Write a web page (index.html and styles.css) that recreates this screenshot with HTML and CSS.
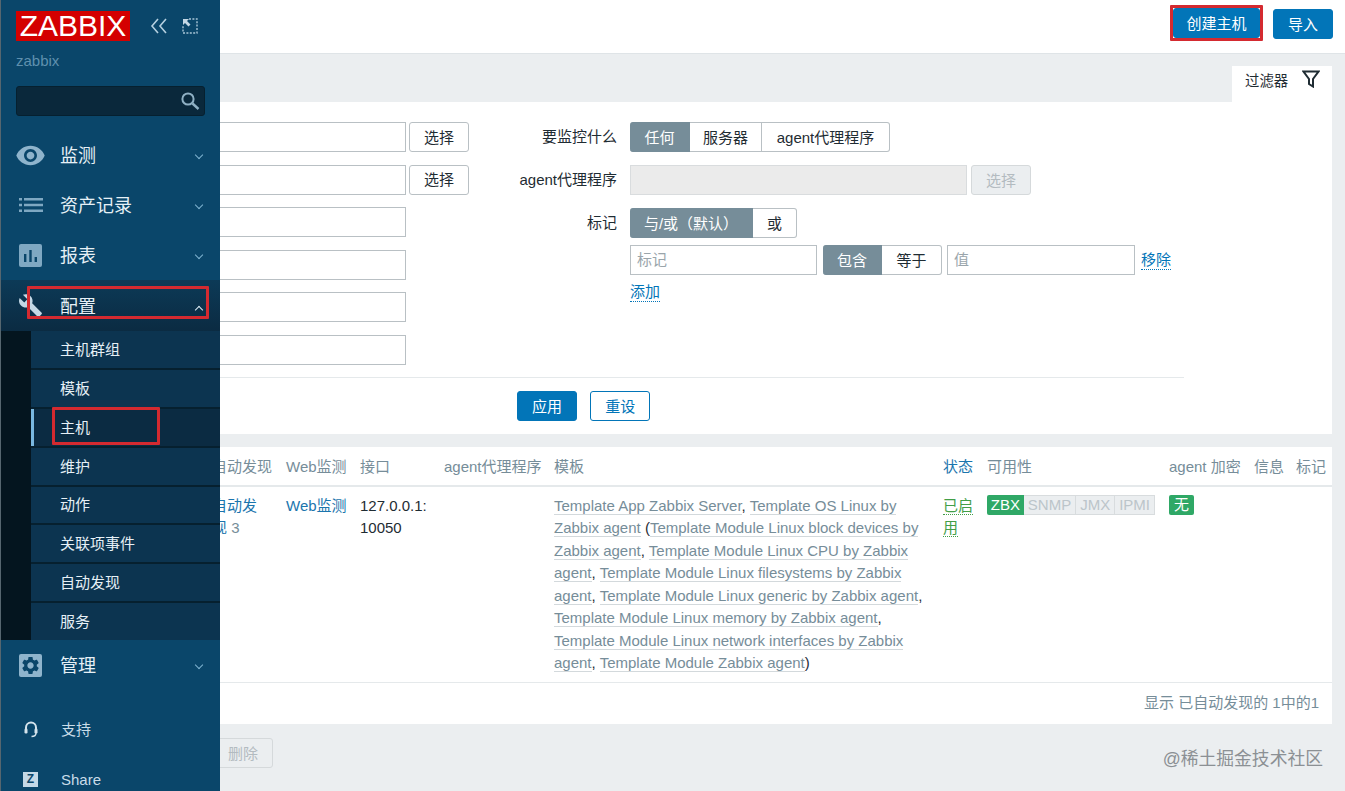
FILE: index.html
```html
<!DOCTYPE html>
<html lang="zh-CN">

<head>
    <meta charset="UTF-8">
    <title>配置 主机</title>
    <link rel="stylesheet" href="styles.css">
</head>

<body>

    <!-- 侧边栏 -->
    <aside class="sidebar">
        <div class="logo-row">
            <div class="logo">ZABBIX</div>
            <svg class="collapse-icon" viewBox="0 0 18 16" width="18" height="16"><path d="M8 1 2 8l6 7M16 1l-6 7 6 7" fill="none" stroke="#b5d0e0" stroke-width="1.6"/></svg>
            <svg class="expand-icon" viewBox="0 0 16 16" width="16" height="16"><path d="M7 1h8v14H1V7" fill="none" stroke="#a9c6d8" stroke-width="1.4" stroke-dasharray="2 1.4"/><path d="M1 1h6L5 3l3.5 3.5-2 2L3 5 1 7z" fill="#c4d8e6"/></svg>
        </div>
        <div class="server-name">zabbix</div>
        <div class="search-box">
            <svg viewBox="0 0 20 20" width="20" height="20"><circle cx="8" cy="8" r="5.6" fill="none" stroke="#8fb0c4" stroke-width="2"/><path d="m12.5 12.5 6 5.5" stroke="#8fb0c4" stroke-width="2.4"/></svg>
        </div>

        <nav>
            <div class="nav-item">
                <span class="nav-icon"><svg viewBox="0 0 24 24" width="31" height="31"><path fill="#8fb4cc" d="M12 4.5C7 4.5 2.73 7.61 1 12c1.73 4.39 6 7.5 11 7.5s9.27-3.11 11-7.5c-1.73-4.39-6-7.5-11-7.5zM12 17c-2.76 0-5-2.24-5-5s2.24-5 5-5 5 2.24 5 5-2.24 5-5 5zm0-8c-1.66 0-3 1.34-3 3s1.34 3 3 3 3-1.34 3-3-1.34-3-3-3z"/></svg></span>
                <span class="nav-text">监测</span>
                <span class="chevron"></span>
            </div>
            <div class="nav-item">
                <span class="nav-icon"><svg viewBox="0 0 24 14" width="24" height="14"><path fill="#7fa8c2" d="M0 0h3v2.5H0zM5 0h19v2.5H5zM0 5.7h3v2.5H0zM5 5.7h19v2.5H5zM0 11.4h3v2.5H0zM5 11.4h19v2.5H5z"/></svg></span>
                <span class="nav-text">资产记录</span>
                <span class="chevron"></span>
            </div>
            <div class="nav-item">
                <span class="nav-icon"><svg viewBox="0 0 23 23" width="23" height="23"><rect width="23" height="23" rx="2" fill="#7fa8c2"/><path fill="#0a466a" d="M5 10h2.4v8H5zM10.3 6h2.4v12h-2.4zM15.6 13H18v5h-2.4z"/></svg></span>
                <span class="nav-text">报表</span>
                <span class="chevron"></span>
            </div>
            <div class="nav-item nav-open">
                <span class="nav-icon"><svg viewBox="0 0 24 24" width="25" height="25"><path fill="#c4d8e6" d="M22.7 19l-9.1-9.1c.9-2.3.4-5-1.5-6.9-2-2-5-2.4-7.4-1.3L9 6 6 9 1.6 4.7C.4 7.1.9 10.1 2.9 12.1c1.9 1.9 4.6 2.4 6.9 1.5l9.1 9.1c.4.4 1 .4 1.4 0l2.3-2.3c.5-.4.5-1.1.1-1.4z"/></svg></span>
                <span class="nav-text">配置</span>
                <span class="chevron chevron-up"></span>
                <span class="mark mark-config"></span>
            </div>
            <div class="submenu">
                <a class="sub-item">主机群组</a>
                <a class="sub-item">模板</a>
                <a class="sub-item sub-active">主机<span class="mark mark-host"></span></a>
                <a class="sub-item">维护</a>
                <a class="sub-item">动作</a>
                <a class="sub-item">关联项事件</a>
                <a class="sub-item">自动发现</a>
                <a class="sub-item">服务</a>
            </div>
            <div class="nav-item">
                <span class="nav-icon"><span class="icon-tile"><svg viewBox="0 0 24 24" width="21" height="21"><path fill="#0a466a" d="M19.14 12.94c.04-.3.06-.61.06-.94 0-.32-.02-.64-.07-.94l2.03-1.58c.18-.14.23-.41.12-.61l-1.92-3.32c-.12-.22-.37-.29-.59-.22l-2.39.96c-.5-.38-1.03-.7-1.62-.94l-.36-2.54c-.04-.24-.24-.41-.48-.41h-3.84c-.24 0-.43.17-.47.41l-.36 2.54c-.59.24-1.13.57-1.62.94l-2.39-.96c-.22-.08-.47 0-.59.22L2.74 8.87c-.12.21-.08.47.12.61l2.03 1.58c-.05.3-.09.63-.09.94s.02.64.07.94l-2.03 1.58c-.18.14-.23.41-.12.61l1.92 3.32c.12.22.37.29.59.22l2.39-.96c.5.38 1.03.7 1.62.94l.36 2.54c.05.24.24.41.48.41h3.84c.24 0 .44-.17.47-.41l.36-2.54c.59-.24 1.13-.56 1.62-.94l2.39.96c.22.08.47 0 .59-.22l1.92-3.32c.12-.22.07-.47-.12-.61l-2.01-1.58zM12 15.6c-1.98 0-3.6-1.62-3.6-3.6s1.62-3.6 3.6-3.6 3.6 1.62 3.6 3.6-1.62 3.6-3.6 3.6z"/></svg></span></span>
                <span class="nav-text">管理</span>
                <span class="chevron"></span>
            </div>
        </nav>

        <div class="side-links">
            <div class="side-link">
                <span class="nav-icon"><svg viewBox="0 0 14 17" width="14" height="17"><path d="M2 10V6.5a5 5 0 0 1 10 0V10" fill="none" stroke="#d4e3ec" stroke-width="2"/><rect x="0.5" y="7.5" width="3" height="5" rx="1.2" fill="#d4e3ec"/><rect x="10.5" y="7.5" width="3" height="5" rx="1.2" fill="#d4e3ec"/><path d="M12 12c0 2.5-2 3.5-4.5 3.5" fill="none" stroke="#d4e3ec" stroke-width="1.4"/></svg></span>
                <span class="side-text">支持</span>
            </div>
            <div class="side-link">
                <span class="nav-icon"><span class="z-tile">Z</span></span>
                <span class="share-text">Share</span>
            </div>
        </div>
    </aside>

    <main class="main">
        <header class="top-bar">
            <div class="create-mark">
                <button class="btn btn-primary btn-create">创建主机</button>
            </div>
            <button class="btn btn-primary btn-import">导入</button>
        </header>

        <!-- 过滤器 -->
        <div class="filter-tabs">
            <div class="filter-tab">
                <span>过滤器</span>
                <svg viewBox="0 0 18 18" width="18" height="18"><path d="M1.5 1.5h15L11 9v7.5L7 14V9z" fill="none" stroke="#1f2c33" stroke-width="2"/></svg>
            </div>
        </div>
        <section class="filter-panel">
            <div class="filter-body">
                <div class="filter-left">
                    <div class="left-row"><input class="text-input" type="text"><button class="btn btn-outline">选择</button></div>
                    <div class="left-row"><input class="text-input" type="text"><button class="btn btn-outline">选择</button></div>
                    <div class="left-row"><input class="text-input" type="text"></div>
                    <div class="left-row"><input class="text-input" type="text"></div>
                    <div class="left-row"><input class="text-input" type="text"></div>
                    <div class="left-row"><input class="text-input" type="text"></div>
                </div>
                <div class="filter-right">
                    <div class="right-row row-monitor">
                        <label>要监控什么</label>
                        <div class="segments">
                            <span class="seg seg-on seg-any">任何</span>
                            <span class="seg seg-server">服务器</span>
                            <span class="seg seg-proxy">agent代理程序</span>
                        </div>
                    </div>
                    <div class="right-row row-proxy">
                        <label>agent代理程序</label>
                        <input class="text-input input-disabled" type="text" disabled>
                        <button class="btn btn-disabled">选择</button>
                    </div>
                    <div class="right-row row-tags">
                        <label>标记</label>
                        <div class="segments">
                            <span class="seg seg-on seg-andor">与/或（默认）</span>
                            <span class="seg seg-or">或</span>
                        </div>
                    </div>
                    <div class="right-row row-tag-input">
                        <label></label>
                        <input class="text-input input-tag" type="text" placeholder="标记">
                        <div class="segments segments-tag">
                            <span class="seg seg-on seg-contains">包含</span>
                            <span class="seg seg-equals">等于</span>
                        </div>
                        <input class="text-input input-value" type="text" placeholder="值">
                        <a class="link-dotted link-remove">移除</a>
                    </div>
                    <div class="right-row row-add">
                        <label></label>
                        <a class="link-dotted">添加</a>
                    </div>
                </div>
            </div>
            <div class="filter-actions">
                <button class="btn btn-primary btn-apply">应用</button>
                <button class="btn btn-reset">重设</button>
            </div>
        </section>

        <!-- 主机列表 -->
        <section class="hosts-card">
            <table class="hosts-table">
                <colgroup>
                    <col class="col-discovery">
                    <col class="col-web">
                    <col class="col-iface">
                    <col class="col-proxy">
                    <col class="col-templates">
                    <col class="col-status">
                    <col class="col-avail">
                    <col class="col-encrypt">
                    <col class="col-info">
                    <col class="col-tags">
                </colgroup>
                <thead>
                    <tr>
                        <th class="cell-discovery">自动发现</th>
                        <th>Web监测</th>
                        <th>接口</th>
                        <th>agent代理程序</th>
                        <th>模板</th>
                        <th class="th-sorted">状态</th>
                        <th>可用性</th>
                        <th>agent 加密</th>
                        <th>信息</th>
                        <th>标记</th>
                    </tr>
                </thead>
                <tbody>
                    <tr>
                        <td class="cell-discovery"><a class="link">自动发现</a> <span class="count">3</span></td>
                        <td class="cell-web"><a class="link">Web监测</a></td>
                        <td class="iface">127.0.0.1: 10050</td>
                        <td></td>
                        <td class="templates">
                            <a>Template App Zabbix Server</a>, <a>Template OS Linux by Zabbix agent</a> (<a>Template Module Linux block devices by Zabbix agent</a>, <a>Template Module Linux CPU by Zabbix agent</a>, <a>Template Module Linux filesystems by Zabbix agent</a>, <a>Template Module Linux generic by Zabbix agent</a>, <a>Template Module Linux memory by Zabbix agent</a>, <a>Template Module Linux network interfaces by Zabbix agent</a>, <a>Template Module Zabbix agent</a>)
                        </td>
                        <td><a class="status-on">已启用</a></td>
                        <td>
                            <div class="avail">
                                <span class="tag tag-zbx">ZBX</span><span class="tag tag-off">SNMP</span><span class="tag tag-off">JMX</span><span class="tag tag-off">IPMI</span>
                            </div>
                        </td>
                        <td><span class="tag tag-none">无</span></td>
                        <td></td>
                        <td></td>
                    </tr>
                </tbody>
            </table>
            <div class="table-footer">显示 已自动发现的 1中的1</div>
        </section>

        <div class="mass-actions">
            <button class="btn btn-disabled btn-delete">删除</button>
        </div>
    </main>

    <div class="watermark">@稀土掘金技术社区</div>

</body>

</html>
```

FILE: styles.css
```css
* {
    box-sizing: border-box;
}

body {
    margin: 0;
    height: 791px;
    overflow: hidden;
    display: flex;
    position: relative;
    font-family: "Liberation Sans", "Noto Sans CJK SC", sans-serif;
    font-size: 15px;
    color: #1f2c33;
    background-color: #ebeef0;
}

/* sidebar */
.sidebar {
    width: 220px;
    flex: none;
    height: 791px;
    overflow: hidden;
    position: relative;
    background-color: #0a466a;
    border-left: 1px solid #56666f;
}

.logo-row {
    display: flex;
    align-items: flex-start;
    padding: 11px 0 0 15px;
}

.logo {
    width: 114px;
    height: 30px;
    background-color: #d40000;
    color: #fff;
    font-size: 30px;
    line-height: 30px;
    text-align: center;
}

.collapse-icon {
    margin: 7px 0 0 20px;
}

.expand-icon {
    margin: 7px 0 0 14px;
}

.server-name {
    margin: 11px 0 0 15px;
    height: 18px;
    line-height: 18px;
    color: #5f90ae;
    font-size: 15px;
}

.search-box {
    margin: 16px 0 0 15px;
    width: 189px;
    height: 30px;
    display: flex;
    align-items: center;
    justify-content: flex-end;
    padding-right: 4px;
    background-color: #0a283b;
    border: 1px solid #06202f;
    border-radius: 3px;
}

nav {
    margin-top: 14px;
}

.nav-item {
    height: 50px;
    display: flex;
    align-items: center;
    position: relative;
}

.nav-open {
    height: 51px;
    background: linear-gradient(#0c3a57, #0b2b42);
}

.nav-icon {
    width: 59px;
    flex: none;
    display: flex;
    justify-content: center;
}

.nav-text {
    flex: 1;
    padding-bottom: 2px;
    color: #e6f0f6;
    font-size: 18px;
}

.chevron {
    width: 6px;
    height: 6px;
    margin: 0 18px 0 0;
    border-right: 1.5px solid #7fb3d0;
    border-bottom: 1.5px solid #7fb3d0;
    transform: rotate(45deg);
}

.chevron-up {
    margin-bottom: -8px;
    border-color: #dcebf3;
    transform: rotate(225deg);
}

.icon-tile {
    width: 23px;
    height: 23px;
    display: flex;
    align-items: center;
    justify-content: center;
    background-color: #8fb4cc;
    border-radius: 2px;
}

/* red annotation boxes from the screenshot */
.mark {
    position: absolute;
    border: 3px solid #d42a30;
    border-radius: 1px;
}

.mark-config {
    left: 26px;
    top: 6px;
    width: 182px;
    height: 33px;
}

.mark-host {
    left: 21px;
    top: -2px;
    width: 108px;
    height: 38px;
}

.submenu {
    height: 309px;
    display: flex;
    flex-direction: column;
    padding-left: 30px;
    background-color: #04151f;
}

.sub-item {
    flex: 1;
    display: flex;
    align-items: center;
    position: relative;
    padding: 0 0 2px 29px;
    font-size: 15px;
    color: #e6f0f6;
    background-color: #0c3450;
    border-bottom: 2px solid #06202f;
}

.sub-item:last-child {
    border-bottom: none;
}

.sub-active {
    background-color: #0b2b42;
    box-shadow: inset 3px 0 0 #7ab8e0;
}

.side-links {
    margin-top: 14px;
}

.side-link {
    height: 50px;
    display: flex;
    align-items: center;
    font-size: 15px;
    color: #c9dce8;
}

.side-text {
    margin-left: 1px;
    padding-bottom: 2px;
}

.share-text {
    margin-left: 1px;
}

.z-tile {
    width: 15px;
    height: 15px;
    background-color: #c4d8e6;
    color: #0a466a;
    font-size: 12px;
    font-weight: bold;
    line-height: 15px;
    text-align: center;
}

/* main area */
.main {
    flex: 1;
    min-width: 0;
    height: 791px;
    overflow: hidden;
}

.top-bar {
    height: 54px;
    display: flex;
    justify-content: flex-end;
    align-items: flex-start;
    padding: 9px 12px 0 0;
    background-color: #fff;
    border-bottom: 1px solid #dfe4e7;
}

.btn {
    height: 30px;
    padding: 0 0 2px;
    font-family: inherit;
    font-size: 15px;
    border-radius: 3px;
    cursor: pointer;
}

.btn-primary {
    background-color: #0275b8;
    border: 1px solid #0275b8;
    color: #fff;
}

.create-mark {
    margin: -4px 10px 0 0;
    border: 3px solid #d42a30;
    border-radius: 1px;
}

.btn-create {
    display: block;
    width: 87px;
}

.btn-import {
    width: 60px;
}

.btn-apply {
    width: 60px;
}

.btn-outline {
    width: 60px;
    margin-left: 3px;
    background-color: #fff;
    border: 1px solid #b9c0c4;
    color: #1f2c33;
}

.btn-disabled {
    width: 60px;
    background-color: #ebeef0;
    border: 1px solid #d5d9db;
    color: #b3bbc0;
}

.btn-reset {
    width: 60px;
    margin-left: 9px;
    background-color: #fff;
    border: 1px solid #0275b8;
    color: #0275b8;
}

.filter-tabs {
    display: flex;
    justify-content: flex-end;
    padding: 12px 13px 0 0;
}

.filter-tab {
    width: 100px;
    height: 36px;
    display: flex;
    align-items: center;
    gap: 14px;
    padding: 0 0 10px 13px;
    background-color: #fff;
    font-size: 14.4px;
}

.filter-panel {
    height: 332px;
    margin-right: 13px;
    background-color: #fff;
}

.filter-body {
    height: 276px;
    display: flex;
    margin-right: 148px;
    padding-top: 20px;
    border-bottom: 1px solid #e5e9eb;
}

.filter-left {
    width: 289px;
    display: flex;
    flex-direction: column;
    gap: 12.6px;
    margin-left: -40px;
    flex: none;
}

.left-row {
    display: flex;
    height: 30px;
}

.text-input {
    height: 30px;
    padding: 0 6px 2px;
    font-family: inherit;
    font-size: 15px;
    background-color: #fff;
    border: 1px solid #b9c0c4;
}

.text-input::placeholder {
    color: #9aa5ab;
}

.left-row .text-input {
    width: 226px;
}

.filter-right {
    margin-left: 1px;
}

.right-row {
    display: flex;
    align-items: center;
}

.right-row label {
    width: 147px;
    margin-right: 13px;
    flex: none;
    padding-bottom: 3px;
    text-align: right;
}

.row-monitor {
    height: 30px;
}

.row-proxy {
    height: 30px;
    margin-top: 13px;
}

.row-tags {
    height: 30px;
    margin-top: 13px;
}

.row-tag-input {
    height: 30px;
    margin-top: 7px;
}

.row-add {
    margin-top: 7px;
    height: 20px;
}

.segments {
    display: flex;
    height: 30px;
}

.seg {
    display: flex;
    align-items: center;
    justify-content: center;
    padding-bottom: 2px;
    border: 1px solid #b9c0c4;
    border-left: none;
    background-color: #fff;
}

.seg:first-child {
    border-radius: 3px 0 0 3px;
}

.seg:last-child {
    border-radius: 0 3px 3px 0;
}

.seg-on {
    background-color: #768d99;
    border-color: #768d99;
    color: #fff;
}

.seg-any {
    width: 60px;
}

.seg-server {
    width: 72px;
}

.seg-proxy {
    width: 128px;
}

.seg-andor {
    width: 123px;
}

.seg-or {
    width: 44px;
}

.seg-contains {
    width: 59px;
}

.seg-equals {
    width: 60px;
}

.input-disabled {
    width: 337px;
    background-color: #ebebeb;
    border-color: #d9dcde;
}

.row-proxy .btn-disabled {
    margin-left: 4px;
}

.input-tag {
    width: 187px;
}

.segments-tag {
    margin-left: 6px;
}

.input-value {
    width: 188px;
    margin-left: 5px;
}

.link-remove {
    margin-left: 6px;
}

.link-dotted {
    color: #0275b8;
    border-bottom: 1px dotted #0275b8;
    line-height: 19px;
}

.filter-actions {
    padding: 13px 0 0 297px;
}

.hosts-card {
    height: 277px;
    margin: 13px 13px 0 0;
    overflow: hidden;
    background-color: #fff;
}

.hosts-table {
    width: 1123px;
    margin-left: -11px;
    table-layout: fixed;
    border-collapse: collapse;
}

.col-discovery { width: 70px; }
.col-web { width: 74px; }
.col-iface { width: 84px; }
.col-proxy { width: 110px; }
.col-templates { width: 389px; }
.col-status { width: 44px; }
.col-avail { width: 182px; }
.col-encrypt { width: 85px; }
.col-info { width: 42px; }
.col-tags { width: 43px; }

.hosts-table th {
    height: 39px;
    padding: 0 7px 2px;
    text-align: left;
    font-weight: normal;
    white-space: nowrap;
    color: #768d99;
    border-bottom: 2px solid #e5e9eb;
}

.hosts-table .th-sorted {
    color: #1b75ad;
}

.hosts-table td {
    padding: 8px 7px 7px;
    vertical-align: top;
    line-height: 22.45px;
    border-bottom: 1px solid #e5e9eb;
}

.hosts-table .cell-discovery {
    padding-left: 3px;
    padding-right: 11px;
}

.hosts-table .cell-web {
    white-space: nowrap;
}

.link {
    color: #1b75ad;
}

.count {
    color: #768d99;
}

.templates {
    color: #1f2c33;
}

.templates a {
    color: #768d99;
    border-bottom: 1px solid #d3d9dc;
}

.status-on {
    color: #429e47;
    border-bottom: 1px dotted #429e47;
}

.avail {
    display: flex;
}

.tag {
    display: inline-block;
    height: 20px;
    line-height: 20px;
    text-align: center;
}

.tag-zbx {
    width: 38px;
    background-color: #2fa866;
    color: #fff;
    border-radius: 2px 0 0 2px;
}

.tag-off {
    padding: 0 4px;
    line-height: 18px;
    background-color: #ebeef0;
    color: #bcc5ca;
    border: 1px solid #d8dcde;
    border-left: none;
}

.tag-none {
    display: block;
    width: 25px;
    background-color: #2fa866;
    color: #fff;
    border-radius: 2px;
}

.table-footer {
    height: 41px;
    line-height: 40px;
    padding-right: 13px;
    text-align: right;
    color: #768d99;
}

.mass-actions {
    margin-top: 14px;
}

.btn-delete {
    margin-left: -7px;
}

.watermark {
    position: absolute;
    right: 22px;
    top: 744px;
    color: #8b9094;
    font-size: 17.8px;
}
```
